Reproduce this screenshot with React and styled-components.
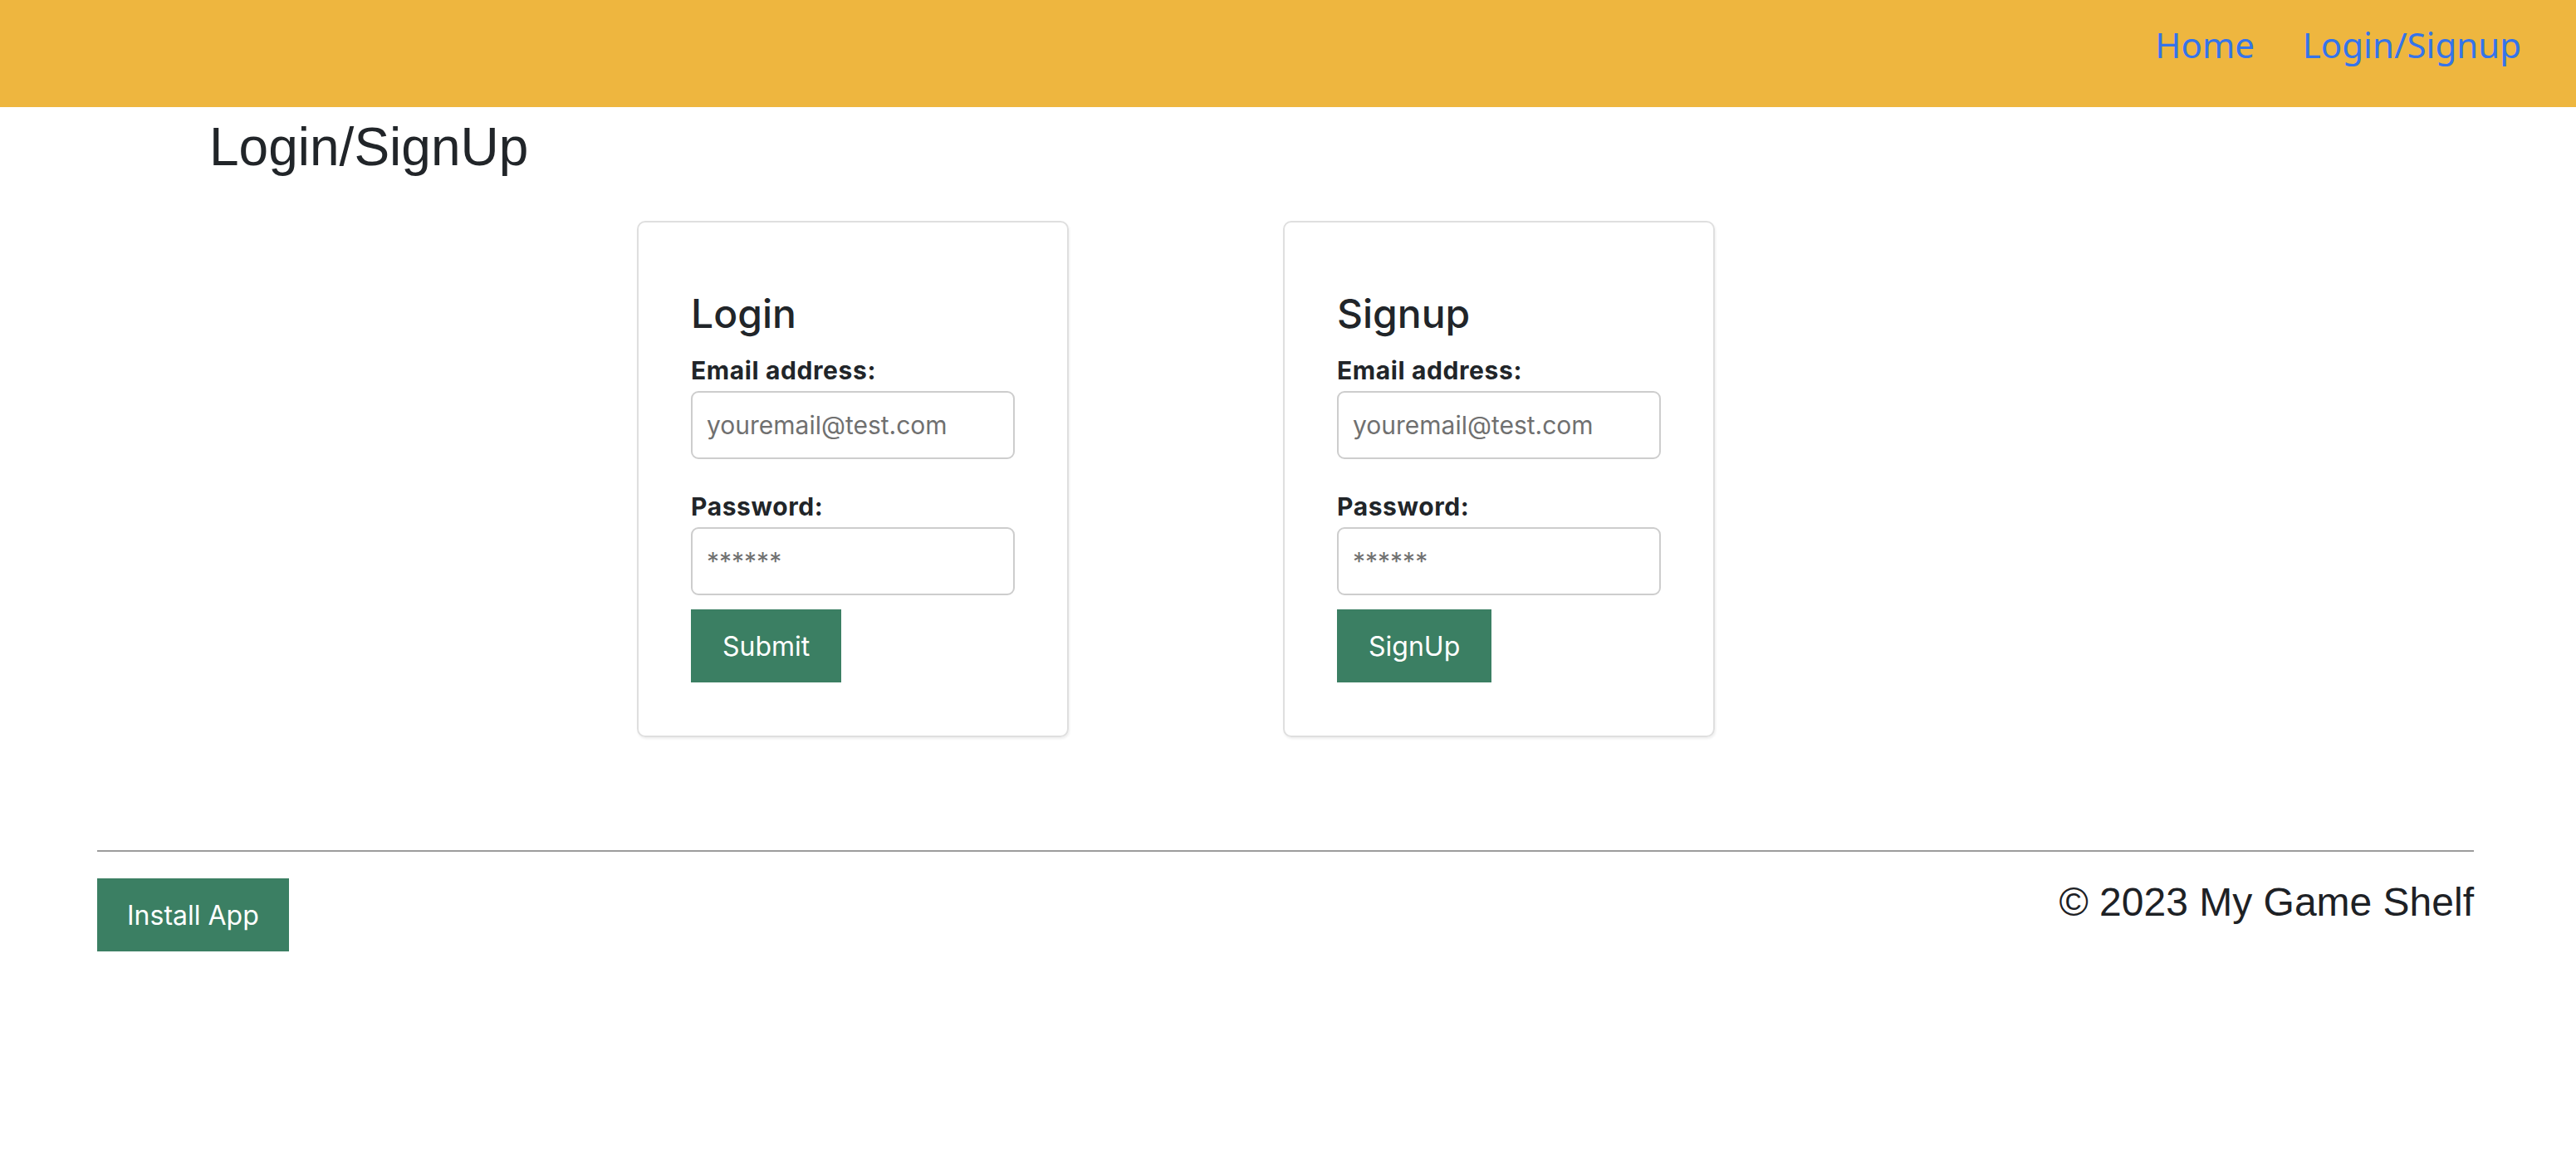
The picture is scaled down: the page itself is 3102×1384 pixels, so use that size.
import React from "react";
import styled, { createGlobalStyle } from "styled-components";

const GlobalStyle = createGlobalStyle`
  html, body {
    margin: 0;
    padding: 0;
    background: #ffffff;
    color: #212529;
    font-family: Inter, "Noto Sans", sans-serif;
  }
  * {
    box-sizing: border-box;
  }
`;

const NavWrapper = styled.nav`
  height: 129px;
  background: #eeb63f;
  display: flex;
  justify-content: flex-end;
  align-items: flex-start;
  padding: 22px 66px 0 0;
  gap: 58px;
`;

const NavLink = styled.a`
  font-family: "Noto Sans", "Open Sans", sans-serif;
  font-size: 42px;
  line-height: 1.5;
  color: #3574ea;
  text-decoration: none;
  cursor: pointer;
`;

const Main = styled.main`
  padding-top: 10px;
`;

const PageTitle = styled.h1`
  margin: 0 0 50px 252px;
  font-family: "Liberation Sans", Arial, sans-serif;
  font-weight: 400;
  font-size: 64px;
  line-height: 1.2;
`;

const CardRow = styled.div`
  display: flex;
  gap: 258px;
  padding-left: 767px;
`;

const Card = styled.section`
  width: 520px;
  border: 2px solid #dfdfdf;
  border-radius: 10px;
  box-shadow: 1px 2px 3px rgba(0, 0, 0, 0.07);
  padding: 81px 63px 64px 63px;
  display: flex;
  flex-direction: column;
`;

const CardTitle = styled.h4`
  margin: 0 0 15px 0;
  font-size: 48px;
  font-weight: 500;
  line-height: 1.2;
`;

const Label = styled.label`
  display: block;
  font-size: 30px;
  font-weight: 700;
  line-height: 50px;
  letter-spacing: 0.6px;
  margin-top: ${(p) => (p.$first ? "0" : "32px")};
`;

const Input = styled.input`
  display: block;
  width: 100%;
  height: 82px;
  border: 2px solid #cdcdcd;
  border-radius: 9px;
  padding: 0 17px;
  font-family: Inter, sans-serif;
  font-size: 30px;
  color: #212529;
  outline: none;
  &::placeholder {
    color: #707070;
  }
`;

const Button = styled.button`
  align-self: flex-start;
  height: 88px;
  padding: ${(p) => (p.$inCard ? "0 38px" : "0 36px")};
  margin-top: ${(p) => (p.$inCard ? "17px" : "0")};
  border: none;
  background: #3b7f63;
  color: #ffffff;
  font-family: Inter, sans-serif;
  font-size: 32px;
  font-weight: 400;
  cursor: pointer;
`;

const Footer = styled.footer`
  margin-top: 136px;
  padding: 0 123px 0 117px;
`;

const Rule = styled.hr`
  margin: 0;
  border: none;
  border-top: 2px solid #9c9c9c;
`;

const FooterRow = styled.div`
  display: flex;
  justify-content: space-between;
  align-items: flex-start;
  margin-top: 32px;
`;

const Copyright = styled.h3`
  margin: 0;
  font-family: "Liberation Sans", Arial, sans-serif;
  font-weight: 400;
  font-size: 48px;
  line-height: 1.2;
  color: #1d2125;
`;

function AuthCard({ title, action }) {
  return (
    <Card>
      <CardTitle>{title}</CardTitle>
      <Label $first>Email address:</Label>
      <Input type="email" placeholder="youremail@test.com" />
      <Label>Password:</Label>
      <Input type="password" placeholder="******" />
      <Button $inCard>{action}</Button>
    </Card>
  );
}

export default function App() {
  return (
    <>
      <GlobalStyle />
      <NavWrapper>
        <NavLink>Home</NavLink>
        <NavLink>Login/Signup</NavLink>
      </NavWrapper>
      <Main>
        <PageTitle>Login/SignUp</PageTitle>
        <CardRow>
          <AuthCard title="Login" action="Submit" />
          <AuthCard title="Signup" action="SignUp" />
        </CardRow>
      </Main>
      <Footer>
        <Rule />
        <FooterRow>
          <Button>Install App</Button>
          <Copyright>© 2023 My Game Shelf</Copyright>
        </FooterRow>
      </Footer>
    </>
  );
}
